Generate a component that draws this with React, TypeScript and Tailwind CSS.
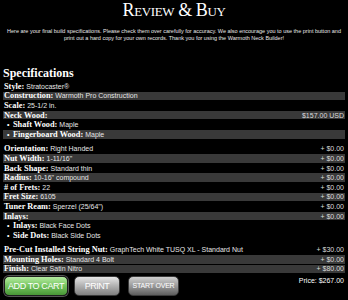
import React from "react";

type RowProps = {
  label: string;
  value?: string;
  price?: string;
  gray?: boolean;
  bullet?: boolean;
};

function Row({ label, value, price, gray, bullet }: RowProps) {
  return (
    <div
      className={
        gray
          ? "flex h-[9.6px] items-center justify-between border-b border-black bg-[#393939] pl-[1px] pr-[1px]"
          : "flex h-[9.6px] items-center justify-between border-b border-black pl-[1px] pr-[1px]"
      }
    >
      <div className="flex items-center whitespace-nowrap">
        {bullet ? (
          <span className="w-[9px] pl-[3px] text-[7px] leading-[9px] font-['Liberation_Sans'] text-white">•</span>
        ) : null}
        <span className="font-['Liberation_Serif'] text-[8.3px] font-bold leading-[9px] text-white">{label}</span>
        {value ? (
          <span className="ml-[2px] font-['Liberation_Sans'] text-[7px] leading-[9px] text-[#e6e6e6]">{value}</span>
        ) : null}
      </div>
      {price ? (
        <span className="font-['Liberation_Sans'] text-[7px] leading-[9px] text-[#dcdcdc] whitespace-nowrap">{price}</span>
      ) : null}
    </div>
  );
}

export default function App() {
  return (
    <div className="h-[300px] w-[348px] overflow-hidden bg-black text-white">
      <h1 className="text-center font-['Liberation_Serif'] text-[18px] leading-[20px] tracking-[-0.4px] text-white [font-variant:small-caps]">
        Review &amp; Buy
      </h1>
      <p className="mt-[8px] whitespace-nowrap text-center font-['Liberation_Sans'] text-[5.5px] leading-[7px] text-[#e8e8e8]">
        Here are your final build specifications. Please check them over carefully for accuracy. We also encourage you to use the print button and
        <br />
        print out a hard copy for your own records. Thank you for using the Warmoth Neck Builder!
      </p>
      <h2 className="mt-[24px] pl-[3px] font-['Liberation_Serif'] text-[12px] font-bold leading-[14px] text-white">
        Specifications
      </h2>
      <div className="mx-[3px] mt-[2px]">
        <Row label="Style:" value="Stratocaster®" />
        <Row label="Construction:" value="Warmoth Pro Construction" gray />
        <Row label="Scale:" value="25-1/2 in." />
        <Row label="Neck Wood:" price="$157.00 USD" gray />
        <div className="mb-[5px]">
          <Row bullet label="Shaft Wood:" value="Maple" />
          <Row bullet label="Fingerboard Wood:" value="Maple" gray />
        </div>
        <Row label="Orientation:" value="Right Handed" price="+ $0.00" />
        <Row label="Nut Width:" value='1-11/16"' price="+ $0.00" gray />
        <Row label="Back Shape:" value="Standard thin" price="+ $0.00" />
        <Row label="Radius:" value='10-16" compound' price="+ $0.00" gray />
        <Row label="# of Frets:" value="22" price="+ $0.00" />
        <Row label="Fret Size:" value="6105" price="+ $0.00" gray />
        <Row label="Tuner Ream:" value='Sperzel (25/64")' price="+ $0.00" />
        <Row label="Inlays:" price="+ $0.00" gray />
        <div className="mb-[5px]">
          <Row bullet label="Inlays:" value="Black Face Dots" />
          <Row bullet label="Side Dots:" value="Black Side Dots" />
        </div>
        <Row label="Pre-Cut Installed String Nut:" value="GraphTech White TUSQ XL - Standard Nut" price="+ $30.00" />
        <Row label="Mounting Holes:" value="Standard 4 Bolt" price="+ $0.00" gray />
        <Row label="Finish:" value="Clear Satin Nitro" price="+ $80.00" gray />
        <div className="mt-[2px] flex items-start justify-between">
          <div className="flex items-center pl-[1px]">
            <button className="flex h-[20px] w-[64px] items-center justify-center rounded-[5px] border border-[#1e1e1e] bg-gradient-to-b from-[#b4eca0] via-[#74c45e] to-[#489636] font-['Liberation_Sans'] text-[9px] tracking-[-0.4px] text-white shadow-[0_0_0_1px_#555]">
              ADD TO CART
            </button>
            <button className="ml-[6px] flex h-[20px] w-[46px] items-center justify-center rounded-[5px] border border-[#3a3a3a] bg-gradient-to-b from-[#e6e6e6] via-[#b0b0b0] to-[#808080] font-['Liberation_Sans'] text-[9px] tracking-[-0.5px] text-white">
              PRINT
            </button>
            <button className="ml-[8px] flex h-[20px] w-[51px] items-center justify-center rounded-[5px] border border-[#3a3a3a] bg-gradient-to-b from-[#cfcfcf] via-[#9a9a9a] to-[#5e5e5e] font-['Liberation_Sans'] text-[7px] tracking-[-0.2px] text-white">
              START OVER
            </button>
          </div>
          <span className="pr-[1px] font-['Liberation_Sans'] text-[7px] leading-[9px] text-white">Price: $267.00</span>
        </div>
      </div>
    </div>
  );
}
